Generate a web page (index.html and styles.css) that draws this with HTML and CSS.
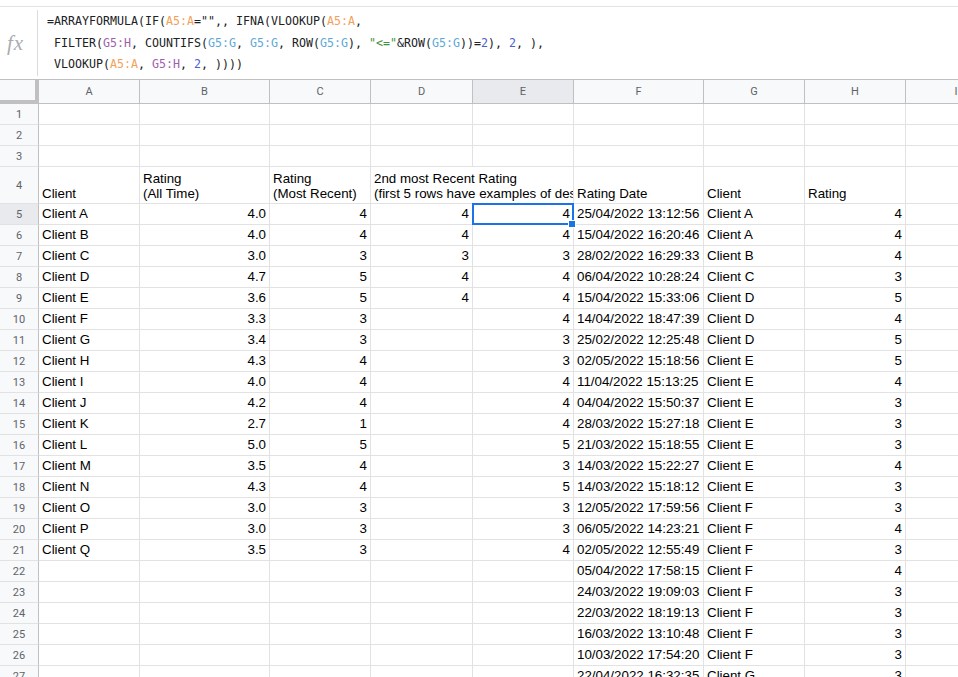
FILE: index.html
```html
<!DOCTYPE html>
<html lang="en">
<head>
    <meta charset="UTF-8">
    <meta name="viewport" content="width=device-width, initial-scale=1.0">
    <title>Client Ratings</title>
    <link rel="stylesheet" href="styles.css">
</head>
<body>
    <!-- formula bar -->
    <div class="formula-bar">
        <div class="fx">fx</div>
        <div class="formula">
            <div class="line">=ARRAYFORMULA(IF(<span class="ref-a">A5:A</span>="",, IFNA(VLOOKUP(<span class="ref-a">A5:A</span>,</div>
            <div class="line"> FILTER(<span class="ref-gh">G5:H</span>, COUNTIFS(<span class="ref-g">G5:G</span>, <span class="ref-g">G5:G</span>, ROW(<span class="ref-g">G5:G</span>), <span class="str">"&lt;="</span>&amp;ROW(<span class="ref-g">G5:G</span>))=<span class="digit">2</span>), <span class="digit">2</span>, ),</div>
            <div class="line"> VLOOKUP(<span class="ref-a">A5:A</span>, <span class="ref-gh">G5:H</span>, <span class="digit">2</span>, ))))</div>
        </div>
    </div>

    <!-- grid -->
    <div class="sheet">
        <div class="row head">
            <div class="corner"></div>
            <div class="col-head">A</div>
            <div class="col-head">B</div>
            <div class="col-head">C</div>
            <div class="col-head">D</div>
            <div class="col-head on">E</div>
            <div class="col-head">F</div>
            <div class="col-head">G</div>
            <div class="col-head">H</div>
            <div class="col-head">I</div>
        </div>

        <div class="row">
            <div class="row-head">1</div>
            <div class="cell"></div><div class="cell"></div><div class="cell"></div><div class="cell"></div><div class="cell"></div><div class="cell"></div><div class="cell"></div><div class="cell"></div><div class="cell"></div>
        </div>
        <div class="row">
            <div class="row-head">2</div>
            <div class="cell"></div><div class="cell"></div><div class="cell"></div><div class="cell"></div><div class="cell"></div><div class="cell"></div><div class="cell"></div><div class="cell"></div><div class="cell"></div>
        </div>
        <div class="row">
            <div class="row-head">3</div>
            <div class="cell"></div><div class="cell"></div><div class="cell"></div><div class="cell"></div><div class="cell"></div><div class="cell"></div><div class="cell"></div><div class="cell"></div><div class="cell"></div>
        </div>

        <div class="row tall">
            <div class="row-head">4</div>
            <div class="cell title">Client</div>
            <div class="cell title">Rating<br>(All Time)</div>
            <div class="cell title">Rating<br>(Most Recent)</div>
            <div class="cell title span2"><span>2nd most Recent Rating</span><span>(first 5 rows have examples of desired output)</span></div>
            <div class="cell title">Rating Date</div>
            <div class="cell title">Client</div>
            <div class="cell title">Rating</div>
            <div class="cell"></div>
        </div>

        <div class="row">
            <div class="row-head on">5</div>
            <div class="cell">Client A</div><div class="cell num">4.0</div><div class="cell num">4</div><div class="cell num">4</div>
            <div class="cell num selected">4<div class="selection"><div class="handle"></div></div></div>
            <div class="cell">25/04/2022 13:12:56</div><div class="cell">Client A</div><div class="cell num">4</div><div class="cell"></div>
        </div>
        <div class="row">
            <div class="row-head">6</div>
            <div class="cell">Client B</div><div class="cell num">4.0</div><div class="cell num">4</div><div class="cell num">4</div><div class="cell num">4</div>
            <div class="cell">15/04/2022 16:20:46</div><div class="cell">Client A</div><div class="cell num">4</div><div class="cell"></div>
        </div>
        <div class="row">
            <div class="row-head">7</div>
            <div class="cell">Client C</div><div class="cell num">3.0</div><div class="cell num">3</div><div class="cell num">3</div><div class="cell num">3</div>
            <div class="cell">28/02/2022 16:29:33</div><div class="cell">Client B</div><div class="cell num">4</div><div class="cell"></div>
        </div>
        <div class="row">
            <div class="row-head">8</div>
            <div class="cell">Client D</div><div class="cell num">4.7</div><div class="cell num">5</div><div class="cell num">4</div><div class="cell num">4</div>
            <div class="cell">06/04/2022 10:28:24</div><div class="cell">Client C</div><div class="cell num">3</div><div class="cell"></div>
        </div>
        <div class="row">
            <div class="row-head">9</div>
            <div class="cell">Client E</div><div class="cell num">3.6</div><div class="cell num">5</div><div class="cell num">4</div><div class="cell num">4</div>
            <div class="cell">15/04/2022 15:33:06</div><div class="cell">Client D</div><div class="cell num">5</div><div class="cell"></div>
        </div>
        <div class="row">
            <div class="row-head">10</div>
            <div class="cell">Client F</div><div class="cell num">3.3</div><div class="cell num">3</div><div class="cell"></div><div class="cell num">4</div>
            <div class="cell">14/04/2022 18:47:39</div><div class="cell">Client D</div><div class="cell num">4</div><div class="cell"></div>
        </div>
        <div class="row">
            <div class="row-head">11</div>
            <div class="cell">Client G</div><div class="cell num">3.4</div><div class="cell num">3</div><div class="cell"></div><div class="cell num">3</div>
            <div class="cell">25/02/2022 12:25:48</div><div class="cell">Client D</div><div class="cell num">5</div><div class="cell"></div>
        </div>
        <div class="row">
            <div class="row-head">12</div>
            <div class="cell">Client H</div><div class="cell num">4.3</div><div class="cell num">4</div><div class="cell"></div><div class="cell num">3</div>
            <div class="cell">02/05/2022 15:18:56</div><div class="cell">Client E</div><div class="cell num">5</div><div class="cell"></div>
        </div>
        <div class="row">
            <div class="row-head">13</div>
            <div class="cell">Client I</div><div class="cell num">4.0</div><div class="cell num">4</div><div class="cell"></div><div class="cell num">4</div>
            <div class="cell">11/04/2022 15:13:25</div><div class="cell">Client E</div><div class="cell num">4</div><div class="cell"></div>
        </div>
        <div class="row">
            <div class="row-head">14</div>
            <div class="cell">Client J</div><div class="cell num">4.2</div><div class="cell num">4</div><div class="cell"></div><div class="cell num">4</div>
            <div class="cell">04/04/2022 15:50:37</div><div class="cell">Client E</div><div class="cell num">3</div><div class="cell"></div>
        </div>
        <div class="row">
            <div class="row-head">15</div>
            <div class="cell">Client K</div><div class="cell num">2.7</div><div class="cell num">1</div><div class="cell"></div><div class="cell num">4</div>
            <div class="cell">28/03/2022 15:27:18</div><div class="cell">Client E</div><div class="cell num">3</div><div class="cell"></div>
        </div>
        <div class="row">
            <div class="row-head">16</div>
            <div class="cell">Client L</div><div class="cell num">5.0</div><div class="cell num">5</div><div class="cell"></div><div class="cell num">5</div>
            <div class="cell">21/03/2022 15:18:55</div><div class="cell">Client E</div><div class="cell num">3</div><div class="cell"></div>
        </div>
        <div class="row">
            <div class="row-head">17</div>
            <div class="cell">Client M</div><div class="cell num">3.5</div><div class="cell num">4</div><div class="cell"></div><div class="cell num">3</div>
            <div class="cell">14/03/2022 15:22:27</div><div class="cell">Client E</div><div class="cell num">4</div><div class="cell"></div>
        </div>
        <div class="row">
            <div class="row-head">18</div>
            <div class="cell">Client N</div><div class="cell num">4.3</div><div class="cell num">4</div><div class="cell"></div><div class="cell num">5</div>
            <div class="cell">14/03/2022 15:18:12</div><div class="cell">Client E</div><div class="cell num">3</div><div class="cell"></div>
        </div>
        <div class="row">
            <div class="row-head">19</div>
            <div class="cell">Client O</div><div class="cell num">3.0</div><div class="cell num">3</div><div class="cell"></div><div class="cell num">3</div>
            <div class="cell">12/05/2022 17:59:56</div><div class="cell">Client F</div><div class="cell num">3</div><div class="cell"></div>
        </div>
        <div class="row">
            <div class="row-head">20</div>
            <div class="cell">Client P</div><div class="cell num">3.0</div><div class="cell num">3</div><div class="cell"></div><div class="cell num">3</div>
            <div class="cell">06/05/2022 14:23:21</div><div class="cell">Client F</div><div class="cell num">4</div><div class="cell"></div>
        </div>
        <div class="row">
            <div class="row-head">21</div>
            <div class="cell">Client Q</div><div class="cell num">3.5</div><div class="cell num">3</div><div class="cell"></div><div class="cell num">4</div>
            <div class="cell">02/05/2022 12:55:49</div><div class="cell">Client F</div><div class="cell num">3</div><div class="cell"></div>
        </div>
        <div class="row">
            <div class="row-head">22</div>
            <div class="cell"></div><div class="cell"></div><div class="cell"></div><div class="cell"></div><div class="cell"></div>
            <div class="cell">05/04/2022 17:58:15</div><div class="cell">Client F</div><div class="cell num">4</div><div class="cell"></div>
        </div>
        <div class="row">
            <div class="row-head">23</div>
            <div class="cell"></div><div class="cell"></div><div class="cell"></div><div class="cell"></div><div class="cell"></div>
            <div class="cell">24/03/2022 19:09:03</div><div class="cell">Client F</div><div class="cell num">3</div><div class="cell"></div>
        </div>
        <div class="row">
            <div class="row-head">24</div>
            <div class="cell"></div><div class="cell"></div><div class="cell"></div><div class="cell"></div><div class="cell"></div>
            <div class="cell">22/03/2022 18:19:13</div><div class="cell">Client F</div><div class="cell num">3</div><div class="cell"></div>
        </div>
        <div class="row">
            <div class="row-head">25</div>
            <div class="cell"></div><div class="cell"></div><div class="cell"></div><div class="cell"></div><div class="cell"></div>
            <div class="cell">16/03/2022 13:10:48</div><div class="cell">Client F</div><div class="cell num">3</div><div class="cell"></div>
        </div>
        <div class="row">
            <div class="row-head">26</div>
            <div class="cell"></div><div class="cell"></div><div class="cell"></div><div class="cell"></div><div class="cell"></div>
            <div class="cell">10/03/2022 17:54:20</div><div class="cell">Client F</div><div class="cell num">3</div><div class="cell"></div>
        </div>
        <div class="row">
            <div class="row-head">27</div>
            <div class="cell"></div><div class="cell"></div><div class="cell"></div><div class="cell"></div><div class="cell"></div>
            <div class="cell">22/04/2022 16:32:35</div><div class="cell">Client G</div><div class="cell num">3</div><div class="cell"></div>
        </div>
    </div>
</body>
</html>
```

FILE: styles.css
```css
body {
    margin: 0;
    height: 677px;
    overflow: hidden;
    background-color: #FFFFFF;
    color: #000000;
    font-family: "Liberation Sans", Arial, sans-serif;
}

/* formula bar */
.formula-bar {
    display: flex;
    align-items: flex-start;
    box-sizing: border-box;
    height: 74px;
    margin-top: 6px;
    border-top: 1px solid #e1e3e6;
    border-bottom: 1px solid #c0c0c0;
}

.fx {
    display: flex;
    align-items: center;
    box-sizing: border-box;
    width: 38px;
    height: 66px;
    margin-top: 3px;
    padding-left: 7px;
    border-right: 1px solid #dadce0;
    font-family: "Liberation Serif", serif;
    font-style: italic;
    font-size: 21px;
    letter-spacing: 1px;
    color: #a9acb0;
}

.formula {
    padding: 4px 0 0 9px;
    font-family: "DejaVu Sans Mono", monospace;
    font-size: 11.63px;
    line-height: 21.7px;
    color: #202124;
}

.line {
    white-space: pre;
}

.ref-a { color: #f29f5a; }
.ref-gh { color: #a061ab; }
.ref-g { color: #5ea8d8; }
.str { color: #3f9142; }
.digit { color: #4e5fcf; }

/* grid */
.row {
    display: grid;
    grid-template-columns: 39px 101px 130px 101px 102px 101px 130px 101px 101px 101px;
    height: 21px;
}

.row.head {
    height: 24px;
}

.row.tall {
    height: 37px;
}

.corner {
    box-sizing: border-box;
    background-color: #f8f9fa;
    border-right: 4px solid #c0c0c0;
    border-bottom: 4px solid #c0c0c0;
}

.col-head,
.row-head {
    display: flex;
    align-items: center;
    justify-content: center;
    box-sizing: border-box;
    background-color: #f8f9fa;
    border-right: 1px solid #c0c0c0;
    font-family: Roboto, "Liberation Sans", sans-serif;
    font-size: 11px;
    color: #5f6368;
    overflow: hidden;
}

.col-head {
    border-bottom: 1px solid #c0c0c0;
}

.row-head {
    border-bottom: 1px solid #e2e2e2;
}

.col-head.on,
.row-head.on {
    background-color: #e8eaed;
}

.cell {
    box-sizing: border-box;
    padding: 0 3px;
    border-right: 1px solid #e2e2e2;
    border-bottom: 1px solid #e2e2e2;
    font-size: 13.33px;
    line-height: 20px;
    white-space: nowrap;
    overflow: hidden;
}

.cell.num {
    text-align: right;
}

.cell.title {
    display: flex;
    flex-direction: column;
    justify-content: flex-end;
    padding-bottom: 2px;
    line-height: 15px;
}

/* D4 runs on over the empty E4 and stops at F4 */
.cell.span2 {
    grid-column: span 2;
    padding-right: 0;
}

.cell.span2 span {
    overflow: hidden;
}

.cell.selected {
    position: relative;
    overflow: visible;
}

.selection {
    position: absolute;
    top: -1px;
    left: -1px;
    right: -1px;
    bottom: -1px;
    border: 2px solid #1a73e8;
}

.handle {
    position: absolute;
    right: -4px;
    bottom: -5px;
    width: 6px;
    height: 6px;
    background-color: #1a73e8;
    border: 1px solid #FFFFFF;
}
```
